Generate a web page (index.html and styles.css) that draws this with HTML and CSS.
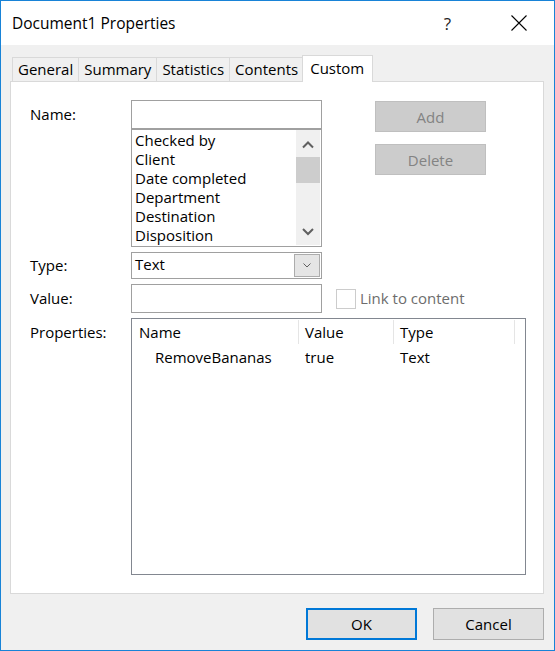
FILE: index.html
```html
<!DOCTYPE html>
<html lang="en">
<head>
    <meta charset="UTF-8">
    <title>Document1 Properties</title>
    <link rel="stylesheet" href="styles.css">
</head>
<body>
    <div class="window">
        <div class="titlebar">
            <span class="title">Document1 Properties</span>
            <span class="caption-btn help">?</span>
            <span class="caption-btn close">
                <svg width="16" height="16" viewBox="0 0 16 16">
                    <path d="M0.5 0.5 L15.5 15.5 M15.5 0.5 L0.5 15.5" stroke="#000" stroke-width="1.1" fill="none"/>
                </svg>
            </span>
        </div>

        <div class="content">
            <div class="tabs">
                <div class="tab">General</div>
                <div class="tab">Summary</div>
                <div class="tab">Statistics</div>
                <div class="tab">Contents</div>
                <div class="tab active">Custom</div>
            </div>

            <div class="panel">
                <div class="row">
                    <div class="label tall">Name:</div>
                    <div class="fields">
                        <div class="textbox name-box"></div>
                        <div class="listbox">
                            <div class="items">
                                <div>Checked by</div>
                                <div>Client</div>
                                <div>Date completed</div>
                                <div>Department</div>
                                <div>Destination</div>
                                <div>Disposition</div>
                            </div>
                            <div class="scrollbar">
                                <svg class="arrow" width="24" height="27" viewBox="0 0 24 27">
                                    <path d="M7 17.5 L12 12.5 L17 17.5" stroke="#606060" stroke-width="2" fill="none"/>
                                </svg>
                                <div class="thumb"></div>
                                <div class="track"></div>
                                <svg class="arrow" width="24" height="27" viewBox="0 0 24 27">
                                    <path d="M7 11 L12 16 L17 11" stroke="#606060" stroke-width="2" fill="none"/>
                                </svg>
                            </div>
                        </div>
                    </div>
                    <div class="side-buttons">
                        <div class="button disabled">Add</div>
                        <div class="button disabled">Delete</div>
                    </div>
                </div>

                <div class="row gap">
                    <div class="label combo-label">Type:</div>
                    <div class="combo">
                        <span class="combo-text">Text</span>
                        <span class="drop">
                            <svg width="8" height="5" viewBox="0 0 8 5">
                                <path d="M0.5 0.5 L4 4 L7.5 0.5" stroke="#606060" stroke-width="1" fill="none"/>
                            </svg>
                        </span>
                    </div>
                </div>

                <div class="row gap">
                    <div class="label tall">Value:</div>
                    <div class="textbox"></div>
                    <div class="check">
                        <span class="box"></span>
                        <span class="check-text">Link to content</span>
                    </div>
                </div>

                <div class="row gap">
                    <div class="label tall">Properties:</div>
                    <div class="listview">
                        <div class="lv-header">
                            <div class="col col-name">Name</div>
                            <div class="col col-value">Value</div>
                            <div class="col col-type">Type</div>
                        </div>
                        <div class="lv-row">
                            <div class="cell col-name indent">RemoveBananas</div>
                            <div class="cell col-value">true</div>
                            <div class="cell col-type">Text</div>
                        </div>
                    </div>
                </div>
            </div>

            <div class="footer">
                <div class="button default">OK</div>
                <div class="button">Cancel</div>
            </div>
        </div>
    </div>
</body>
</html>
```

FILE: styles.css
```css
* {
    box-sizing: border-box;
}

body {
    margin: 0;
    font-family: "Open Sans", "Noto Sans", sans-serif;
    font-size: 15px;
    color: #000;
}

.window {
    width: 555px;
    height: 651px;
    border: 1px solid #1883d7;
    background-color: #f0f0f0;
    display: flex;
    flex-direction: column;
}

/* title bar */
.titlebar {
    height: 44px;
    flex-shrink: 0;
    background-color: #fff;
    display: flex;
    align-items: center;
    padding-left: 11px;
}

.title {
    flex: 1;
    font-size: 15.5px;
}

.caption-btn {
    width: 70px;
    height: 44px;
    display: flex;
    align-items: center;
    justify-content: center;
}

.help {
    font-size: 17px;
    color: #222;
    padding-right: 3px;
}

/* tabs + page */
.content {
    flex: 1;
    padding: 10px 10px 0 9px;
}

.tabs {
    display: flex;
    align-items: flex-end;
    height: 26px;
    padding-left: 2px;
}

.tab {
    height: 24px;
    line-height: 22px;
    padding: 0 5px;
    border: 1px solid #d9d9d9;
    border-bottom: none;
    margin-right: -1px;
    background-color: #f0f0f0;
}

.tab.active {
    height: 27px;
    line-height: 24px;
    margin: 0 -2px -1px -1px;
    padding: 0 8px 0 7px;
    background-color: #fff;
    position: relative;
    z-index: 1;
}

.panel {
    height: 513px;
    background-color: #fff;
    border: 1px solid #d9d9d9;
    padding: 18px 0 0 19px;
}

.row {
    display: flex;
    align-items: flex-start;
}

.row.gap {
    margin-top: 5px;
}

.label {
    width: 101px;
    display: flex;
    align-items: center;
}

.label.tall { height: 28px; }
.label.combo-label { height: 26px; }

.fields {
    width: 191px;
}

.textbox {
    width: 191px;
    height: 29px;
    border: 1px solid #a0a0a0;
    background-color: #fff;
}

.listbox {
    height: 118px;
    border: 1px solid #a0a0a0;
    display: flex;
    overflow: hidden;
}

.items {
    flex: 1;
    padding: 1px 0 0 3px;
    line-height: 19px;
}

.scrollbar {
    width: 24px;
    margin: 0 1px 1px 0;
    background-color: #f0f0f0;
    display: flex;
    flex-direction: column;
}

.arrow {
    display: block;
    flex-shrink: 0;
}

.thumb {
    height: 26px;
    background-color: #cdcdcd;
}

.track {
    flex: 1;
}

.side-buttons {
    margin-left: 53px;
    padding-top: 1px;
    display: flex;
    flex-direction: column;
    gap: 12px;
}

.button {
    width: 111px;
    height: 32px;
    border: 1px solid #adadad;
    background-color: #e1e1e1;
    display: flex;
    align-items: center;
    justify-content: center;
}

.button.disabled {
    height: 31px;
    background-color: #cccccc;
    border-color: #bfbfbf;
    color: #838383;
}

.button.default {
    border: 2px solid #0078d7;
}

.combo {
    width: 191px;
    height: 27px;
    border: 1px solid #a0a0a0;
    background-color: #fff;
    display: flex;
    align-items: center;
    padding-left: 3px;
}

.combo-text {
    flex: 1;
    line-height: 23px;
    align-self: flex-start;
}

.drop {
    width: 26px;
    height: 23px;
    margin-right: 1px;
    background-color: #e5e5e5;
    border: 1px solid #acacac;
    display: flex;
    align-items: center;
    justify-content: center;
}

.check {
    height: 29px;
    margin-left: 14px;
    display: flex;
    align-items: center;
    gap: 4px;
}

.box {
    width: 20px;
    height: 20px;
    border: 1px solid #cccccc;
    background-color: #fff;
}

.check-text {
    color: #6d6d6d;
    margin-top: -1px;
}

/* properties list */
.listview {
    width: 395px;
    height: 257px;
    border: 1px solid #828790;
    background-color: #fff;
}

.lv-header,
.lv-row {
    display: flex;
}

.lv-header {
    height: 25px;
    padding-top: 1px;
}

.col {
    height: 24px;
    line-height: 24px;
    border-right: 1px solid #e5e5e5;
}

.lv-row {
    padding-top: 2px;
}

.cell {
    height: 23px;
    line-height: 23px;
}

.col-name { width: 167px; padding-left: 7px; }
.col-value { width: 95px; padding-left: 6px; }
.col-type { width: 121px; padding-left: 6px; }

.cell.indent { padding-left: 23px; }

.footer {
    display: flex;
    justify-content: flex-end;
    gap: 16px;
    padding-top: 14px;
}
```
